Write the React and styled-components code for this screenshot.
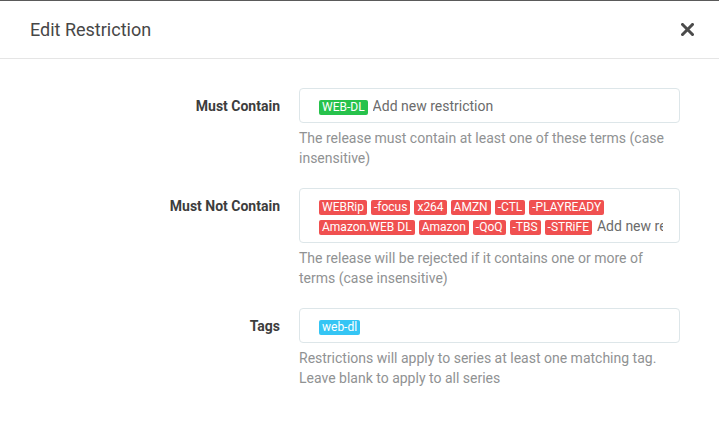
import React from "react";
import styled, { createGlobalStyle } from "styled-components";

const GlobalStyle = createGlobalStyle`
  html, body {
    margin: 0;
    padding: 0;
    background: #fff;
    font-family: Roboto, "Open Sans", "Liberation Sans", sans-serif;
  }
`;

const restrictions = [
  {
    label: "Must Contain",
    kind: "success",
    tags: ["WEB-DL"],
    placeholder: "Add new restriction",
    help: "The release must contain at least one of these terms (case insensitive)",
  },
  {
    label: "Must Not Contain",
    kind: "danger",
    tags: [
      "WEBRip",
      "-focus",
      "x264",
      "AMZN",
      "-CTL",
      "-PLAYREADY",
      "Amazon.WEB DL",
      "Amazon",
      "-QoQ",
      "-TBS",
      "-STRiFE",
    ],
    placeholder: "Add new restriction",
    help: "The release will be rejected if it contains one or more of terms (case insensitive)",
  },
  {
    label: "Tags",
    kind: "info",
    tags: ["web-dl"],
    help: "Restrictions will apply to series at least one matching tag. Leave blank to apply to all series",
  },
];

const tagColors = {
  success: "#27c24c",
  danger: "#f05050",
  info: "#35c5f4",
};

const App = () => {
  return (
    <>
      <GlobalStyle />
      <Modal>
        <Header>
          <Title>Edit Restriction</Title>
          <CloseButton aria-label="Close">
            <svg width="13" height="13" viewBox="0 0 13 13">
              <path
                d="M1.5 1.5 L11.5 11.5 M11.5 1.5 L1.5 11.5"
                stroke="#4b4b4b"
                strokeWidth="3"
                strokeLinecap="square"
              />
            </svg>
          </CloseButton>
        </Header>
        <Body>
          {restrictions.map((r) => (
            <FormGroup key={r.label}>
              <Label>{r.label}</Label>
              <Field>
                <TagInput>
                  {r.tags.map((t) => (
                    <Tag key={t} $kind={r.kind}>
                      {t}
                    </Tag>
                  ))}
                  {r.placeholder ? (
                    <Input type="text" placeholder={r.placeholder} />
                  ) : (
                    <Input type="text" />
                  )}
                </TagInput>
                <HelpText>{r.help}</HelpText>
              </Field>
            </FormGroup>
          ))}
        </Body>
      </Modal>
    </>
  );
};

export default App;

const Modal = styled.div`
  height: 438px;
  box-sizing: border-box;
  border-top: 1px solid #5a5a5a;
  background: #fff;
`;

const Header = styled.div`
  display: flex;
  align-items: center;
  justify-content: space-between;
  height: 57px;
  padding: 0 22px 0 30px;
  border-bottom: 1px solid #e5e5e5;
`;

const Title = styled.div`
  font-size: 18px;
  color: #474747;
`;

const CloseButton = styled.div`
  display: flex;
  align-items: center;
  justify-content: center;
  width: 20px;
  height: 20px;
  cursor: pointer;
`;

const Body = styled.div`
  padding: 29px 30px 0;
`;

const FormGroup = styled.div`
  display: flex;
  margin-bottom: 20px;
`;

const Label = styled.div`
  width: 250px;
  flex: none;
  text-align: right;
  padding-top: 8px;
  margin-right: 19px;
  font-size: 14px;
  line-height: 20px;
  font-weight: bold;
  color: #3d3d3d;
`;

const Field = styled.div`
  width: 381px;
`;

const TagInput = styled.div`
  display: flex;
  flex-wrap: wrap;
  align-items: flex-start;
  box-sizing: border-box;
  min-height: 35px;
  padding: 7px 16px 6px 19px;
  border: 1px solid #dde6e9;
  border-radius: 4px;
  overflow: hidden;
`;

const Tag = styled.span`
  display: inline-block;
  height: 15px;
  line-height: 15px;
  margin: 4px 4px 1px 0;
  padding: 0 3px;
  border-radius: 2px;
  font-size: 12px;
  color: #fff;
  white-space: nowrap;
  background: ${(p) => tagColors[p.$kind]};
`;

const Input = styled.input`
  flex: 1 1 40px;
  min-width: 40px;
  height: 20px;
  padding: 0 0 0 1px;
  margin: 0;
  border: 0;
  outline: none;
  background: transparent;
  font-family: inherit;
  font-size: 14px;
  line-height: 20px;
  color: #555;

  &::placeholder {
    color: #6b6b6b;
  }
`;

const HelpText = styled.div`
  margin-top: 5px;
  font-size: 14px;
  line-height: 20px;
  color: #909293;
`;
